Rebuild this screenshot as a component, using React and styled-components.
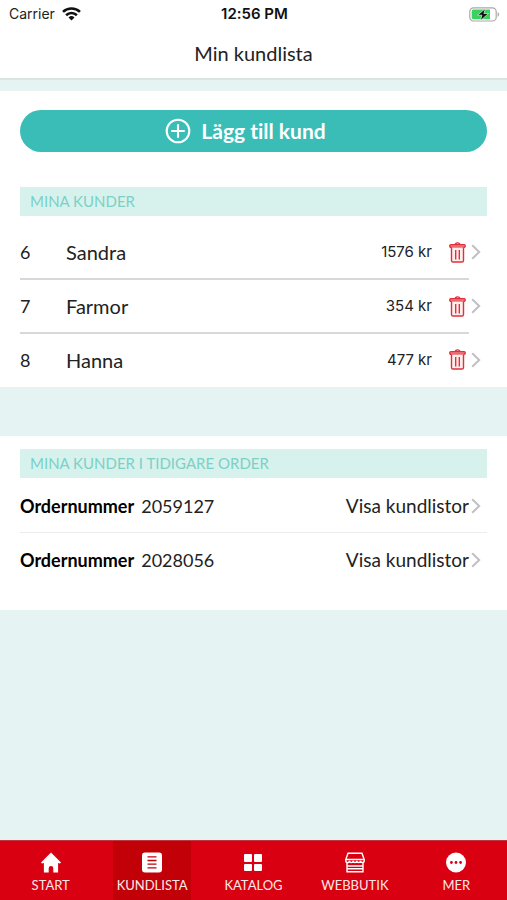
import React from "react";
import styled, { createGlobalStyle, css } from "styled-components";

const GlobalStyle = createGlobalStyle`
  * {
    box-sizing: border-box;
  }

  body {
    margin: 0;
    background: #e5f4f3;
    color: #222;
    font-family: Lato, "Open Sans", sans-serif;
    font-size: 18px;
    line-height: 24px;
    font-variant-ligatures: none;
  }
`;

const StyledPage = styled.div`
  display: flex;
  flex-direction: column;
  min-height: 100vh;
`;

const StyledHeader = styled.header`
  background: white;
  border-bottom: 2px solid #dde3e3;
`;

const StyledStatus = styled.div`
  display: grid;
  grid-template-columns: 1fr auto 1fr;
  align-items: center;
  height: 28px;
  padding: 0 7px 0 9px;
  font-family: Inter, sans-serif;
  font-size: 14px;
`;

const StyledCarrier = styled.span`
  display: flex;
  align-items: center;
  gap: 7px;
`;

const StyledTime = styled.time`
  color: #111;
  font-size: 15px;
  font-weight: 600;
`;

const StyledBattery = styled.span`
  display: flex;
  justify-content: flex-end;
`;

const StyledTitle = styled.h1`
  margin: 0;
  padding: 13px 0;
  font-size: 20px;
  font-weight: 400;
  line-height: 24px;
  text-align: center;
`;

const StyledMain = styled.main`
  flex: 1;
  padding-top: 11px;
`;

const StyledSection = styled.section`
  padding: ${props => (props.$orders ? "13px 20px 23px" : "19px 20px 0")};
  margin-bottom: 49px;
  background: white;
`;

const StyledAddButton = styled.button`
  display: flex;
  align-items: center;
  justify-content: center;
  gap: 10px;
  width: 100%;
  height: 42px;
  margin-bottom: 35px;
  padding: 0 16px 0 0;
  border: 0;
  border-radius: 21px;
  background: #3abdb6;
  color: white;
  font: inherit;
  font-size: 21px;
  font-weight: 700;
  font-variant-ligatures: none;
  cursor: pointer;
`;

const StyledHeading = styled.h2`
  margin: 0;
  padding: 0 10px;
  background: #d7f2ed;
  color: #7bd0c7;
  font-size: 15px;
  font-weight: 400;
  line-height: 29px;
`;

const StyledList = styled.ul`
  margin: 0;
  padding: ${props => (props.$spaced ? "10px 0 0" : "1px 0 0")};
  list-style: none;
`;

const StyledCustomer = styled.li`
  display: flex;
  padding-right: 6px;
`;

const StyledCustomerBody = styled.div`
  display: flex;
  flex: 1;
  align-items: center;
  height: 54px;
  padding-right: 3px;
  border-bottom: 2px solid #d8d8d8;

  ${StyledCustomer}:last-child & {
    height: 53px;
    border-color: transparent;
  }
`;

const StyledNumber = styled.span`
  width: 46px;
`;

const StyledName = styled.span`
  flex: 1;
  font-size: 20px;
`;

const StyledPrice = styled.span`
  margin-right: 17px;
  font-family: Inter, sans-serif;
  font-size: 15px;
`;

const iconButton = css`
  display: flex;
  align-items: center;
  padding: 0;
  border: 0;
  background: none;
  cursor: pointer;
`;

const StyledDelete = styled.button`
  ${iconButton}
`;

const StyledOpen = styled.button`
  ${iconButton}
  height: 52px;
  padding-left: 2px;
`;

const StyledOrder = styled.li`
  display: flex;
  align-items: center;
  height: 54px;
  padding-right: 6px;
  border-bottom: 1px solid #ececec;

  &:last-child {
    border-color: transparent;
  }
`;

const StyledOrderLabel = styled.strong`
  margin-right: 7px;
  color: #000;
  font-weight: 700;
`;

const StyledOrderNumber = styled.span`
  font-size: 18px;
`;

const StyledOrderLink = styled.a`
  display: flex;
  align-items: center;
  gap: 2px;
  margin-left: auto;
  color: inherit;
  font-size: 19px;
  text-decoration: none;
`;

const StyledNav = styled.nav`
  position: sticky;
  bottom: 0;
  display: grid;
  grid-template-columns: repeat(5, 1fr);
  justify-items: center;
  border-top: 1px solid #c5333c;
  background: #d90011;
`;

const StyledTab = styled.a`
  display: flex;
  flex-direction: column;
  align-items: center;
  gap: 3px;
  min-width: 78px;
  height: 59px;
  padding-top: 11px;
  background: ${props => (props.$active ? "#c10008" : "transparent")};
  color: #ffe9e6;
  font-size: 13px;
  line-height: 18px;
  text-decoration: none;
`;

const WifiIcon = () => (
  <svg width="19" height="14" viewBox="0 0 19 14" fill="none" stroke="#111" strokeWidth="2.6" aria-hidden="true">
    <path d="M1 4.9C5.7.4 13.3.4 18 4.9" />
    <path d="M4.1 8.2c3-2.9 7.8-2.9 10.8 0" />
    <path d="M6.5 10.4a4.3 4.3 0 0 1 6 0L9.5 13.6z" fill="#111" stroke="none" />
  </svg>
);

const BatteryIcon = () => (
  <svg width="31" height="15" viewBox="0 0 31 15" aria-hidden="true">
    <rect x=".8" y=".8" width="26.4" height="13.2" rx="3.8" fill="white" stroke="#a9a9a9" strokeWidth="1.2" />
    <path d="M4.5 2.6H21v9.6H4.5a1.8 1.8 0 0 1-1.8-1.8V4.4a1.8 1.8 0 0 1 1.8-1.8z" fill="#37d35c" />
    <path d="M28.6 5.2c2 .7 2 3.8 0 4.5z" fill="#a9a9a9" />
    <path d="M16.4 1.6 8.6 8.2h4.3l-1.4 5.3 8-7h-4.6z" fill="#111" stroke="white" strokeWidth=".6" />
  </svg>
);

const PlusIcon = () => (
  <svg width="26" height="26" viewBox="0 0 26 26" fill="none" stroke="white" strokeWidth="2.1" aria-hidden="true">
    <circle cx="13" cy="13" r="11.3" />
    <path d="M13 7v12M7 13h12" strokeLinecap="round" />
  </svg>
);

const TrashIcon = () => (
  <svg width="17" height="21" viewBox="0 0 17 21" fill="none" stroke="#e0303a" strokeWidth="1.4" aria-hidden="true">
    <path d="M6.2 2.7c0-2.4 4.6-2.4 4.6 0" />
    <rect x=".8" y="2.8" width="15.4" height="2.5" rx="1" fill="#f3a4a8" />
    <path d="M2.5 5.4v13c0 1 .5 1.6 1.5 1.6h9c1 0 1.5-.6 1.5-1.6v-13" fill="#fdeeee" />
    <path d="M6.7 8v9.4M10.3 8v9.4" />
  </svg>
);

const ChevronIcon = () => (
  <svg width="10" height="16" viewBox="0 0 10 16" fill="none" stroke="#c0c0c4" strokeWidth="2" aria-hidden="true">
    <path d="m1.2 1.2 7 6.8-7 6.8" />
  </svg>
);

const HomeIcon = () => (
  <svg width="20" height="21" viewBox="0 0 20 21" fill="white" aria-hidden="true">
    <path d="M10 .5 20 10.4l-1 1-1.9-.5v9.6h-4.8v-4.2a2.3 2.3 0 0 0-4.6 0v4.2H2.9v-9.6l-1.9.5-1-1z" />
  </svg>
);

const ListIcon = () => (
  <svg width="20" height="21" viewBox="0 0 20 21" aria-hidden="true">
    <rect y=".5" width="20" height="20" rx="3" fill="white" />
    <path d="M5.5 4.8h9M5.5 8.5h9M5.5 12.2h9M5.5 15.9h9" stroke="#c10008" strokeWidth="1.3" />
  </svg>
);

const GridIcon = () => (
  <svg width="18" height="21" viewBox="0 0 18 21" fill="white" aria-hidden="true">
    <rect y="2" width="8" height="8" rx="1" />
    <rect x="10" y="2" width="8" height="8" rx="1" />
    <rect y="12" width="8" height="7" rx="1" />
    <rect x="10" y="12" width="8" height="7" rx="1" />
  </svg>
);

const ShopIcon = () => (
  <svg width="20" height="21" viewBox="0 0 20 21" fill="none" stroke="white" strokeWidth="1.4" aria-hidden="true">
    <path d="M3 1.2h14l2.2 6.3H.8z" />
    <path d="M.8 7.5v1.3c0 2.4 3.7 2.4 3.7 0 0 2.4 3.7 2.4 3.7 0 0 2.4 3.6 2.4 3.6 0 0 2.4 3.7 2.4 3.7 0 0 2.4 3.7 2.4 3.7 0V7.5" />
    <path d="M2 10.5v9.3h16v-9.3M2 14h16M2 16.8h16" />
  </svg>
);

const MoreIcon = () => (
  <svg width="20" height="21" viewBox="0 0 20 21" aria-hidden="true">
    <circle cx="10" cy="10.5" r="10" fill="white" />
    <g fill="#d90011">
      <circle cx="5.4" cy="10.5" r="1.4" />
      <circle cx="10" cy="10.5" r="1.4" />
      <circle cx="14.6" cy="10.5" r="1.4" />
    </g>
  </svg>
);

const customers = [
  { number: 6, name: "Sandra", price: "1576 kr" },
  { number: 7, name: "Farmor", price: "354 kr" },
  { number: 8, name: "Hanna", price: "477 kr" }
];

const orders = ["2059127", "2028056"];

const tabs = [
  { label: "START", Icon: HomeIcon },
  { label: "KUNDLISTA", Icon: ListIcon, active: true },
  { label: "KATALOG", Icon: GridIcon },
  { label: "WEBBUTIK", Icon: ShopIcon },
  { label: "MER", Icon: MoreIcon }
];

const App = () => (
  <StyledPage>
    <GlobalStyle />
    <StyledHeader>
      <StyledStatus>
        <StyledCarrier>
          Carrier
          <WifiIcon />
        </StyledCarrier>
        <StyledTime>12:56 PM</StyledTime>
        <StyledBattery>
          <BatteryIcon />
        </StyledBattery>
      </StyledStatus>
      <StyledTitle>Min kundlista</StyledTitle>
    </StyledHeader>
    <StyledMain>
      <StyledSection>
        <StyledAddButton type="button">
          <PlusIcon />
          Lägg till kund
        </StyledAddButton>
        <StyledHeading>MINA KUNDER</StyledHeading>
        <StyledList $spaced>
          {customers.map(({ number, name, price }) => (
            <StyledCustomer key={number}>
              <StyledCustomerBody>
                <StyledNumber>{number}</StyledNumber>
                <StyledName>{name}</StyledName>
                <StyledPrice>{price}</StyledPrice>
                <StyledDelete type="button" aria-label={`Ta bort ${name}`}>
                  <TrashIcon />
                </StyledDelete>
              </StyledCustomerBody>
              <StyledOpen type="button" aria-label={`Visa ${name}`}>
                <ChevronIcon />
              </StyledOpen>
            </StyledCustomer>
          ))}
        </StyledList>
      </StyledSection>
      <StyledSection $orders>
        <StyledHeading>MINA KUNDER I TIDIGARE ORDER</StyledHeading>
        <StyledList>
          {orders.map(order => (
            <StyledOrder key={order}>
              <StyledOrderLabel>Ordernummer</StyledOrderLabel>
              <StyledOrderNumber>{order}</StyledOrderNumber>
              <StyledOrderLink href={`#${order}`}>
                Visa kundlistor
                <ChevronIcon />
              </StyledOrderLink>
            </StyledOrder>
          ))}
        </StyledList>
      </StyledSection>
    </StyledMain>
    <StyledNav>
      {tabs.map(({ label, Icon, active }) => (
        <StyledTab key={label} href={`#${label.toLowerCase()}`} $active={active} aria-current={active ? "page" : undefined}>
          <Icon />
          {label}
        </StyledTab>
      ))}
    </StyledNav>
  </StyledPage>
);

export default App;
